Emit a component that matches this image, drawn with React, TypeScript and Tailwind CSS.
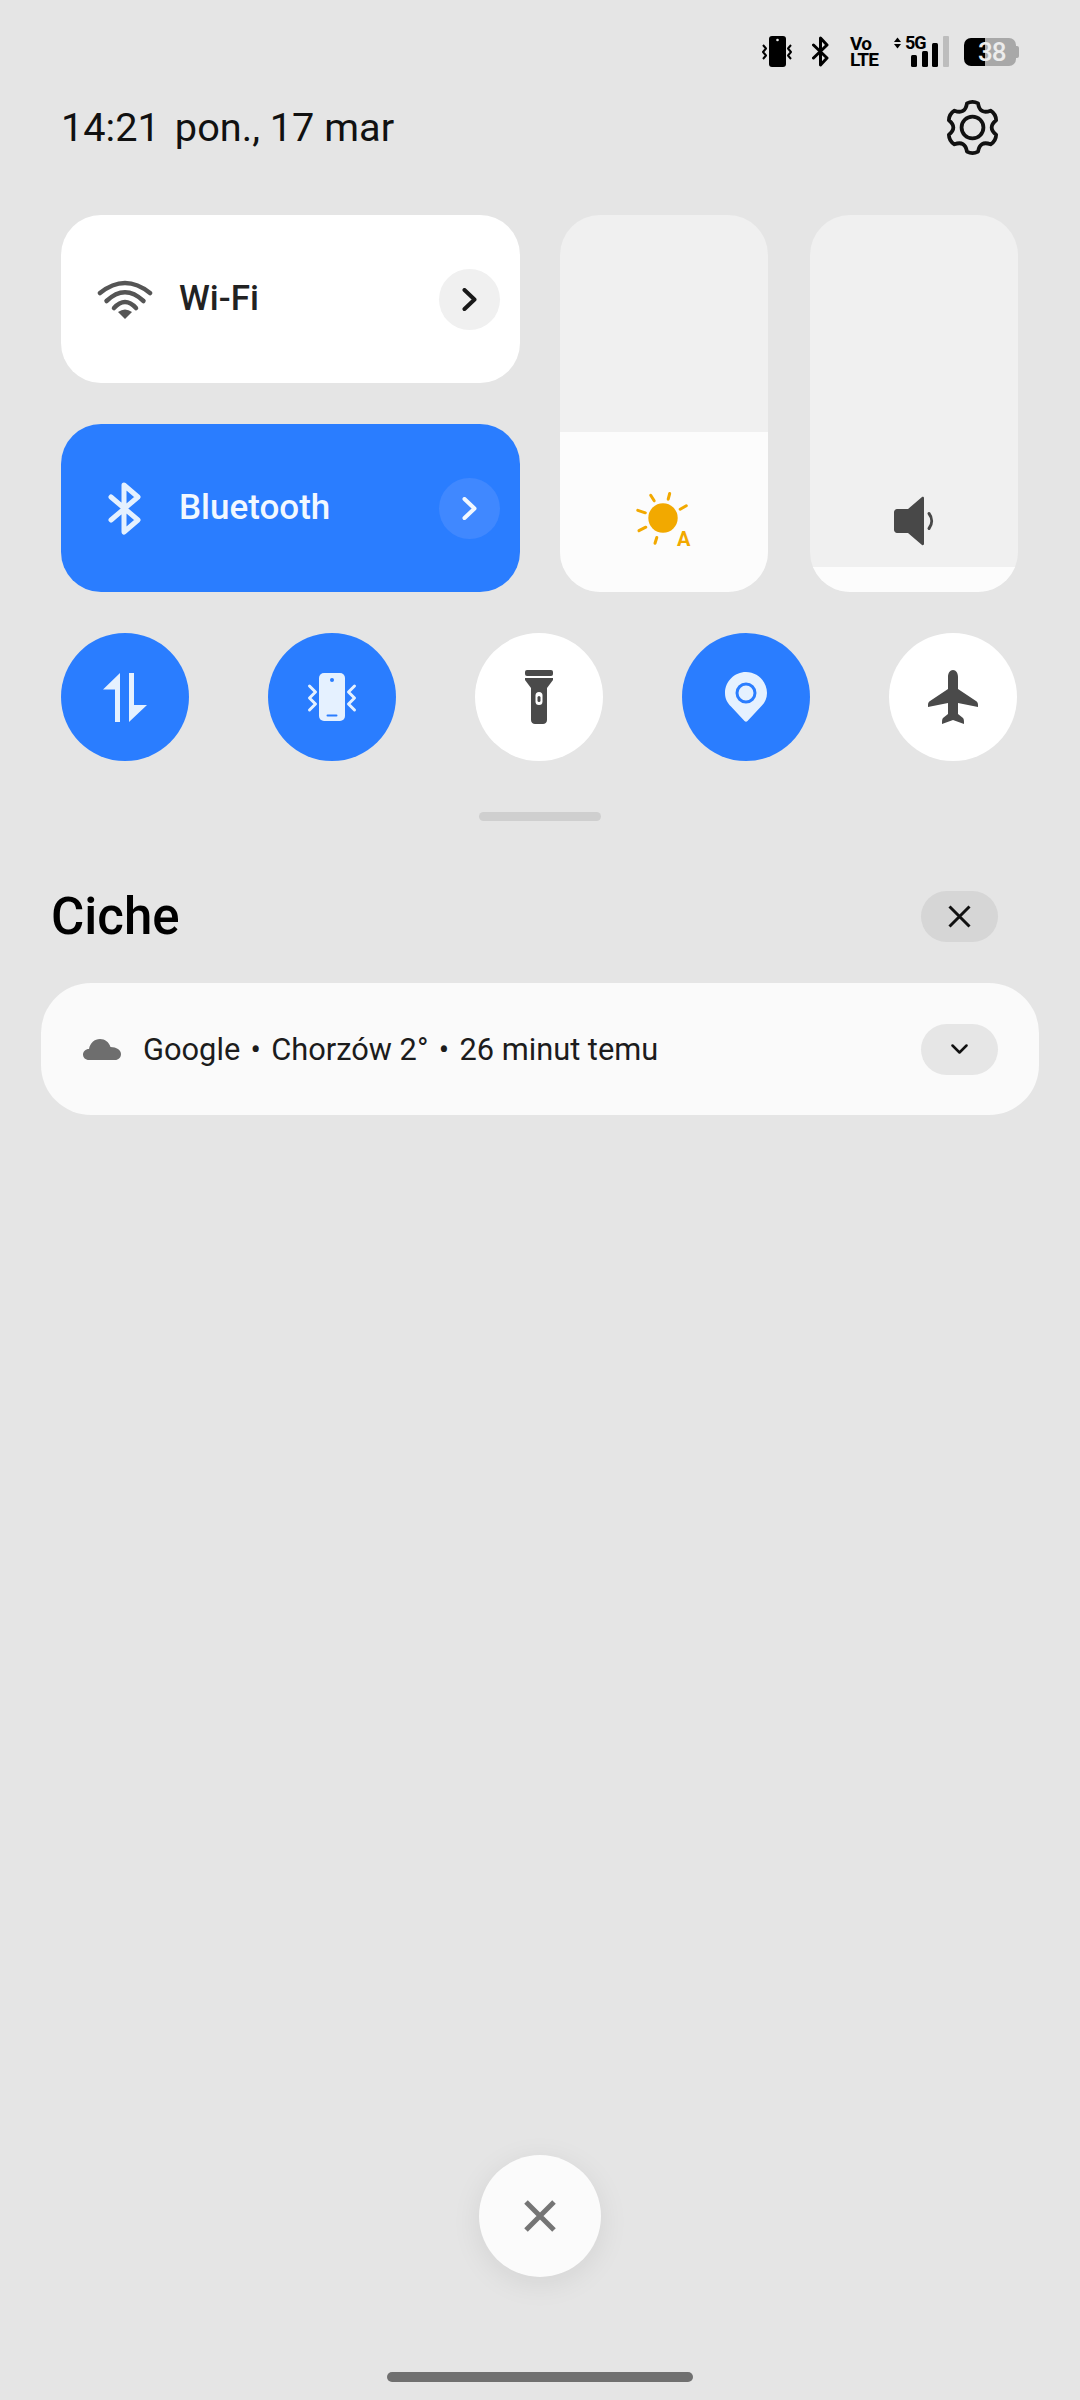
import React from 'react';

const gearPath = () => {
  const cx = 30;
  const cy = 30;
  const pt = (deg: number, r: number) => {
    const a = (deg * Math.PI) / 180;
    return `${(cx + r * Math.cos(a)).toFixed(2)} ${(cy + r * Math.sin(a)).toFixed(2)}`;
  };
  let d = `M${pt(-90 - 13, 26)}`;
  for (let i = 0; i < 6; i++) {
    const a = -90 + i * 60;
    d += ` Q${pt(a, 28.5)} ${pt(a + 13, 26)}`;
    d += ` Q${pt(a + 30, 15.5)} ${pt(a + 60 - 13, 26)}`;
  }
  return d + ' Z';
};

const Chevron: React.FC<{ color: string }> = ({ color }) => (
  <svg width="16" height="23" viewBox="0 0 16 23" fill="none">
    <path d="M2.5 2L12.5 11.5L2.5 21" stroke={color} strokeWidth="4" strokeLinecap="round" strokeLinejoin="round" />
  </svg>
);

const StatusBar: React.FC = () => (
  <div className="flex items-start justify-end pt-[36px] pr-[61px] h-[67px]">
    {/* vibrate */}
    <svg width="32" height="31" viewBox="0 0 32 31" fill="none">
      <rect x="8" y="0" width="17" height="31" rx="3" fill="#000" />
      <circle cx="16.5" cy="4" r="1.3" fill="#e5e5e5" />
      <path d="M2 9L5 12.5L2 16L5 19.5L2 23" stroke="#000" strokeWidth="2" strokeLinejoin="round" />
      <path d="M30 9L27 12.5L30 16L27 19.5L30 23" stroke="#000" strokeWidth="2" strokeLinejoin="round" />
    </svg>
    <svg className="ml-[19px]" width="17" height="31" viewBox="0 0 17 31" fill="none">
      <path d="M1.5 9L15 22L8.5 29V2L15 9L1.5 22" stroke="#000" strokeWidth="3" strokeLinejoin="round" strokeLinecap="round" />
    </svg>
    <div className="ml-[21px] w-[27px] h-[31px] text-[19px] leading-[16px] font-bold text-black tracking-[-0.8px]">
      Vo
      <br />
      LTE
    </div>
    {/* network */}
    <div className="relative ml-[16px] w-[56px] h-[31px]">
      <svg width="56" height="31" viewBox="0 0 56 31" fill="none">
        <path d="M1 6L4.500 1.500L8 6Z" fill="#000" />
        <path d="M1 8L4.500 12.500L8 8Z" fill="#000" />
        <rect x="18" y="19" width="6" height="12" rx="1.500" fill="#000" />
        <rect x="29" y="15" width="6" height="16" rx="1.500" fill="#000" />
        <rect x="39" y="7" width="6" height="24" rx="1.500" fill="#000" />
        <rect x="50" y="0" width="6" height="31" rx="1" fill="#bdbdbd" />
      </svg>
      <span className="absolute left-[12px] top-[-3px] text-[18px] leading-[20px] font-bold text-black tracking-[-1px]">5G</span>
    </div>
    {/* battery */}
    <div className="relative ml-[15px] mt-[2px] w-[55px] h-[28px] flex items-center">
      <div className="w-[21px] h-[28px] bg-black rounded-l-[7px]" />
      <div className="w-[31px] h-[28px] bg-[#a8a8a8] rounded-r-[7px]" />
      <div className="w-[3px] h-[12px] bg-[#a8a8a8] rounded-r-[2px]" />
      <span className="absolute left-[14px] top-0 text-[26px] leading-[28px] font-medium text-[#ececec] tracking-[-1px]">38</span>
    </div>
  </div>
);

const Tile: React.FC<{ label: string; active?: boolean; icon: React.ReactNode }> = ({ label, active, icon }) => (
  <div className={`h-[168px] rounded-[40px] flex items-center pl-[36px] pr-[20px] ${active ? 'bg-[#2a7dff]' : 'bg-white'}`}>
    <div className="w-[82px] h-[56px] flex items-center">{icon}</div>
    <span className={`text-[35px] font-medium ${active ? 'text-[#f2f8ff]' : 'text-[#222]'}`}>{label}</span>
    <div className={`ml-auto w-[61px] h-[61px] rounded-full flex items-center justify-center ${active ? 'bg-[#4088ff]' : 'bg-[#f0f0f0]'}`}>
      <Chevron color={active ? '#f2f8ff' : '#191919'} />
    </div>
  </div>
);

const Round: React.FC<{ active?: boolean; children: React.ReactNode }> = ({ active, children }) => (
  <div className={`w-[128px] h-[128px] rounded-full flex items-center justify-center ${active ? 'bg-[#2a7dff]' : 'bg-white'}`}>
    {children}
  </div>
);

export default function App() {
  return (
    <div className="w-[1080px] h-[2400px] bg-[#e5e5e5] flex flex-col font-['Roboto',sans-serif]">
      <StatusBar />

      {/* Date + settings */}
      <div className="mt-[33px] h-[55px] flex items-center justify-between pl-[61px] pr-[79px]">
        <div className="flex gap-[15px] text-[39.700px] text-[#111]">
          <span>14:21</span>
          <span>pon., 17 mar</span>
        </div>
        <svg width="57" height="57" viewBox="0 0 60 60" fill="none">
          <path d={gearPath()} stroke="#111" strokeWidth="4" strokeLinejoin="round" />
          <circle cx="30" cy="30" r="11.500" stroke="#111" strokeWidth="4" />
        </svg>
      </div>

      {/* Quick settings */}
      <div className="mt-[60px] flex pl-[61px]">
        <div className="w-[459px] flex flex-col gap-[41px]">
          <Tile
            label="Wi-Fi"
            icon={
              <svg width="56" height="39" viewBox="0 0 56 39" fill="none">
                <path d="M3 13Q28 -7 53 13" stroke="#555" strokeWidth="4.500" strokeLinecap="round" />
                <path d="M9.500 21Q28 3.500 46.500 21" stroke="#555" strokeWidth="4.500" strokeLinecap="round" />
                <path d="M17 28Q28 16 39 28" stroke="#555" strokeWidth="4.500" strokeLinecap="round" />
                <path d="M21 32Q28 27 35 32L28 39Z" fill="#555" />
              </svg>
            }
          />
          <Tile
            label="Bluetooth"
            active
            icon={
              <svg className="ml-[11px]" width="33" height="53" viewBox="0 0 33 53" fill="none">
                <path d="M3 15L30 38L16 50V3L30 15L3 38" stroke="#e5f1ff" strokeWidth="5" strokeLinejoin="round" strokeLinecap="round" />
              </svg>
            }
          />
        </div>

        {/* Brightness */}
        <div className="ml-[40px] w-[208px] h-[377px] rounded-[40px] overflow-hidden bg-[#f0f0f0] flex flex-col justify-end">
          <div className="h-[160px] bg-[#fcfcfc] flex justify-center pt-[59px]">
            <div className="relative w-[56px] h-[56px]">
              <svg width="56" height="56" viewBox="0 0 56 56" fill="none">
                <circle cx="27" cy="27" r="14.700" fill="#f2a900" />
                <g stroke="#f2a900" strokeWidth="3" strokeLinecap="round">
                  <path d="M33.700 2.500L32.200 8.200" />
                  <path d="M14.700 4.300L18.200 9.800" />
                  <path d="M50.300 14.700L44.200 18.200" />
                  <path d="M1.800 19.300L9.300 21.800" />
                  <path d="M3 39.700L9.800 36.200" />
                  <path d="M19 52.200L20.800 46.500" />
                </g>
              </svg>
              <span className="absolute left-[41px] top-[38px] text-[20px] leading-[20px] font-bold text-[#f2a900]">A</span>
            </div>
          </div>
        </div>

        {/* Volume */}
        <div className="ml-[42px] w-[208px] h-[377px] rounded-[40px] overflow-hidden bg-[#f0f0f0] flex flex-col">
          <div className="flex-1 flex items-end justify-center pb-[21px]">
            <svg className="ml-[2px]" width="42" height="50" viewBox="0 0 42 50" fill="none">
              <path d="M3 13H14L28 1C29 0.500 30 1 30 2V48C30 49 29 49.500 28 49L14 37H3C1.500 37 0 35.500 0 34V16C0 14.500 1.500 13 3 13Z" fill="#484848" />
              <path d="M35 17.500C38.500 22 38.500 28 35 32.500" stroke="#484848" strokeWidth="3" strokeLinecap="round" />
            </svg>
          </div>
          <div className="h-[25px] bg-[#fcfcfc]" />
        </div>
      </div>

      {/* Round toggles */}
      <div className="mt-[41px] ml-[61px] flex gap-[79px]">
        <Round active>
          <svg width="46" height="50" viewBox="0 0 46 50" fill="#e5f1ff">
            <path d="M18 1V50H13V17.500H1Z" />
            <path d="M27 1H32V33H45L27 50Z" />
          </svg>
        </Round>
        <Round active>
          <svg width="50" height="48" viewBox="0 0 50 48" fill="none">
            <rect x="12" y="0" width="26" height="48" rx="5" fill="#e5f1ff" />
            <circle cx="25" cy="7" r="2" fill="#2a7dff" />
            <rect x="19.500" y="41.500" width="11" height="2" rx="1" fill="#2a7dff" />
            <path d="M2.500 13L8.500 19L2.500 25L8.500 31L2.500 37" stroke="#e5f1ff" strokeWidth="3" strokeLinecap="round" strokeLinejoin="round" />
            <path d="M47.500 13L41.500 19L47.500 25L41.500 31L47.500 37" stroke="#e5f1ff" strokeWidth="3" strokeLinecap="round" strokeLinejoin="round" />
          </svg>
        </Round>
        <Round>
          <svg width="28" height="54" viewBox="0 0 28 54" fill="none">
            <rect x="0" y="0" width="28" height="6" rx="2" fill="#4a4a4a" />
            <path d="M0 8H28V10L22 18V50C22 52.500 20 54 18 54H10C8 54 6 52.500 6 50V18L0 10Z" fill="#4a4a4a" />
            <rect x="10.500" y="22" width="7" height="13" rx="3.500" fill="#fff" />
            <rect x="12.500" y="26" width="3" height="6" rx="1.500" fill="#4a4a4a" />
          </svg>
        </Round>
        <Round active>
          <svg width="42" height="50" viewBox="0 0 42 50" fill="none">
            <path d="M21 0C32.500 0 42 9.500 42 21C42 27 39.500 31 36 34.500L22.500 49C21.500 50 20.500 50 19.500 49L6 34.500C2.500 31 0 27 0 21C0 9.500 9.500 0 21 0Z" fill="#e5f1ff" />
            <circle cx="21" cy="21" r="9" stroke="#2a7dff" strokeWidth="3" />
          </svg>
        </Round>
        <Round>
          <svg width="50" height="54" viewBox="0 0 50 54" fill="#4a4a4a">
            <path d="M25 0C28 0 30 3 30 7V19L48 31C49.500 32 50 33 50 35V37L30 33V44L35 48C36 49 36 51 36 54L25 50L14 54C14 51 14 49 15 48L20 44V33L0 37V35C0 33 0.500 32 2 31L20 19V7C20 3 22 0 25 0Z" />
          </svg>
        </Round>
      </div>

      {/* Drag handle */}
      <div className="mt-[51px] w-[122px] h-[9px] rounded-full bg-[#cfcfcf] self-center" />

      {/* Silent section */}
      <div className="mt-[70px] h-[51px] flex items-center justify-between pl-[51px] pr-[82px]">
        <span className="pt-[2px] text-[51px] font-medium text-black">Ciche</span>
        <div className="w-[77px] h-[51px] rounded-full bg-[#d6d6d6] flex items-center justify-center">
          <svg width="23" height="23" viewBox="0 0 23 23" fill="none">
            <path d="M1.500 1.500L21.500 21.500M21.500 1.500L1.500 21.500" stroke="#111" strokeWidth="3" />
          </svg>
        </div>
      </div>

      <div className="mt-[41px] mx-[41px] h-[132px] rounded-[50px] bg-[#fafafa] flex items-center pl-[42px] pr-[41px]">
        <svg width="38" height="21" viewBox="0 0 38 21" fill="#6e6e6e">
          <path d="M6 21C2.500 21 0 18.500 0 15.500C0 12.500 2.500 10 6 10C7 4 11.500 0 17 0C22 0 26 3 27.500 8C33.500 8 38 11 38 15C38 18.500 35.500 21 32 21Z" />
        </svg>
        <div className="ml-[22px] flex pt-[2px] text-[30.800px] text-[#1c1c1c]">
          <span>Google</span>
          <span className="w-[31px] text-center">•</span>
          <span>Chorzów 2°</span>
          <span className="w-[31px] text-center">•</span>
          <span>26 minut temu</span>
        </div>
        <div className="ml-auto w-[77px] h-[51px] rounded-full bg-[#e6e6e6] flex items-center justify-center">
          <svg width="17" height="10" viewBox="0 0 17 10" fill="none">
            <path d="M1.500 1.500L8.500 8.500L15.500 1.500" stroke="#111" strokeWidth="2.500" strokeLinecap="round" strokeLinejoin="round" />
          </svg>
        </div>
      </div>

      {/* Close all */}
      <div className="mt-auto mb-[95px] self-center w-[122px] h-[122px] rounded-full bg-[#fbfbfb] shadow-[0_6px_30px_rgba(0,0,0,0.08)] flex items-center justify-center">
        <svg width="32" height="32" viewBox="0 0 32 32" fill="none">
          <path d="M2 2L30 30M30 2L2 30" stroke="#757575" strokeWidth="5" />
        </svg>
      </div>

      {/* Home bar */}
      <div className="mb-[18px] w-[306px] h-[10px] rounded-full bg-[#707070] self-center" />
    </div>
  );
}
